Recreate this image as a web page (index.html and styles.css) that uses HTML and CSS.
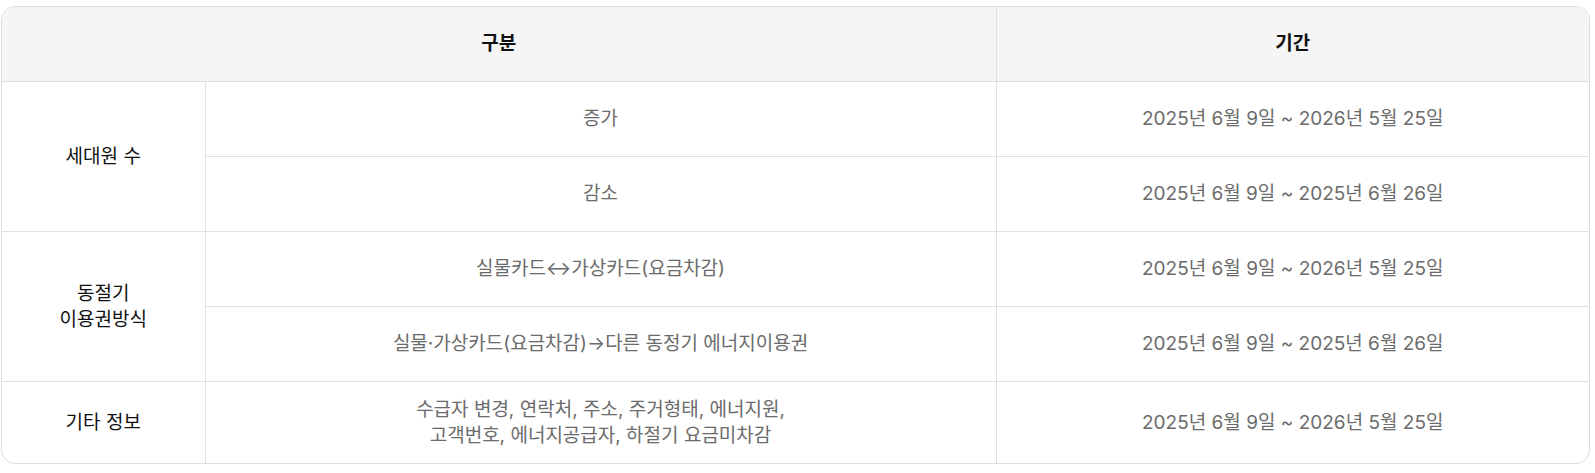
FILE: index.html
```html
<!DOCTYPE html>
<html lang="ko">
<head>
<meta charset="utf-8">
<title>변경 기간</title>
<link rel="stylesheet" href="styles.css">
</head>
<body>
<div class="table-wrap">
  <table class="period-table">
    <colgroup>
      <col class="c1">
      <col class="c2">
      <col class="c3">
    </colgroup>
    <thead>
      <tr>
        <th colspan="2">구분</th>
        <th>기간</th>
      </tr>
    </thead>
    <tbody>
      <tr>
        <td rowspan="2" class="cat">세대원 수</td>
        <td>증가</td>
        <td>2025년 6월 9일 ~ 2026년 5월 25일</td>
      </tr>
      <tr>
        <td>감소</td>
        <td>2025년 6월 9일 ~ 2025년 6월 26일</td>
      </tr>
      <tr>
        <td rowspan="2" class="cat">동절기<br>이용권방식</td>
        <td>실물카드↔가상카드(요금차감)</td>
        <td>2025년 6월 9일 ~ 2026년 5월 25일</td>
      </tr>
      <tr>
        <td>실물·가상카드(요금차감)→다른 동정기 에너지이용권</td>
        <td>2025년 6월 9일 ~ 2025년 6월 26일</td>
      </tr>
      <tr class="last">
        <td class="cat">기타 정보</td>
        <td>수급자 변경, 연락처, 주소, 주거형태, 에너지원,<br>고객번호, 에너지공급자, 하절기 요금미차감</td>
        <td>2025년 6월 9일 ~ 2026년 5월 25일</td>
      </tr>
    </tbody>
  </table>
</div>
</body>
</html>
```
FILE: styles.css
```css
html, body {
  margin: 0;
  padding: 0;
  background: #fff;
}
body {
  padding: 6px 5px 0 1px;
  font-family: Inter, "Noto Sans CJK KR", sans-serif;
}
.table-wrap {
  border: 1px solid #dcdcdc;
  border-radius: 14px;
  overflow: hidden;
}
.period-table {
  width: 100%;
  border-collapse: collapse;
  table-layout: fixed;
}
.c1 { width: 203px; }
.c2 { width: 791px; }
.period-table th,
.period-table td {
  border: 1px solid #e0e0e0;
  text-align: center;
  vertical-align: middle;
  font-size: 19px;
  line-height: 26px;
  padding: 0 10px;
}
.period-table tr > *:first-child { border-left: none; }
.period-table tr > *:last-child { border-right: none; }
.period-table thead th {
  border-top: none;
  background: #f5f5f5;
  height: 74px;
  font-weight: 600;
  color: #111;
}
.period-table tbody td {
  height: 74px;
  color: #6b6b6b;
}
.period-table tbody td.cat {
  color: #111;
  font-weight: 400;
}
.period-table tbody tr.last td {
  border-bottom: none;
  height: 81px;
}
.period-table tbody tr.last td.cat { border-left: none; }
```
